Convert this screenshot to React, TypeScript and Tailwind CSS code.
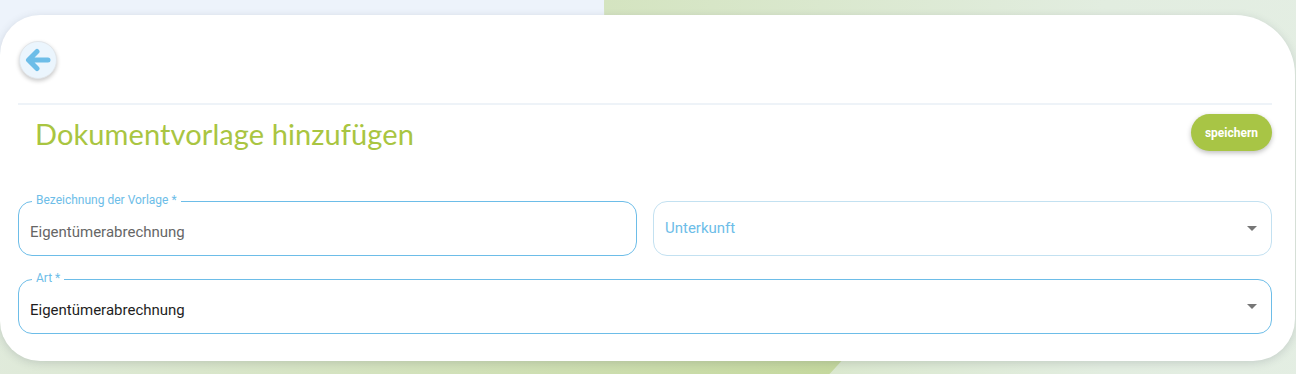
import React from "react"

function BackArrow() {
  return (
    <svg viewBox="0 0 26 24" className="w-[26px] h-[24px]" fill="none" stroke="#6dbde8" strokeWidth="5" strokeLinecap="round" strokeLinejoin="round">
      <path d="M23 12H4M12 3.5L3.5 12L12 20.5" />
    </svg>
  )
}

function Caret() {
  return (
    <svg viewBox="0 0 10 5" className="w-[10px] h-[5px]" fill="#767676">
      <path d="M0 0h10L5 5z" />
    </svg>
  )
}

function Field({
  label,
  value,
  valueClass,
  select,
  className,
}: {
  label?: string
  value: string
  valueClass: string
  select?: boolean
  className?: string
}) {
  return (
    <div
      className={
        "relative h-[55px] rounded-[14px] border flex items-center px-[11px] " +
        (label ? "border-[#6dbde8] " : "border-[#c3e1f1] ") +
        (className ?? "")
      }
    >
      {label && (
        <span className="absolute -top-[9px] left-[13px] bg-white px-[4px] text-[12px] leading-[15px] text-[#6dbde8]">
          {label}
        </span>
      )}
      <span className={"flex-1 text-[15px] " + valueClass + (label ? " pt-[8px]" : "")}>{value}</span>
      {select && (
        <span className="mr-[3px]">
          <Caret />
        </span>
      )}
    </div>
  )
}

export default function App() {
  return (
    <div className="relative w-[1296px] h-[374px] overflow-hidden bg-[#edf3fb] font-['Roboto',sans-serif]">
      {/* background blobs */}
      <div className="absolute left-[604px] top-[-493px] w-[1000px] h-[1000px] rounded-full bg-gradient-to-r from-[#d4e4c0] via-[#e2ede0] to-[#e6efe7]" />
      <div className="absolute left-[-120px] top-[90px] w-[1000px] h-[330px] rounded-full bg-gradient-to-r from-[#e4ede4] via-[#d3e2bd] to-[#c3d79a]" />

      <div className="relative mt-[15px] w-[1295px] h-[346px] bg-white rounded-l-[40px] rounded-tr-[60px] rounded-br-[42px] shadow-[0_2px_8px_rgba(60,70,90,0.18)] pl-[18px] pr-[23px] pt-[26px] flex flex-col">
        <button className="ml-[1px] w-[38px] h-[38px] rounded-full bg-[#ebf5fd] border border-[#e2e6ea] shadow-[0_2px_4px_rgba(0,0,0,0.22)] flex items-center justify-center">
          <BackArrow />
        </button>

        <div className="mt-[24px] h-[2px] bg-[#eef3f8]" />

        <div className="flex items-center justify-between mt-[8px] h-[39px]">
          <h1 className="ml-[17px] mt-[2px] font-['Lato',sans-serif] text-[29px] text-[#a9c541] tracking-[0.1px]">
            Dokumentvorlage hinzufügen
          </h1>
          <button className="w-[81px] h-[37px] rounded-full bg-[#a8c545] text-white text-[12px] font-bold shadow-[0_2px_5px_rgba(0,0,0,0.25)]">
            speichern
          </button>
        </div>

        <div className="grid grid-cols-2 gap-x-[16px] gap-y-[23px] mt-[49px]">
          <Field label="Bezeichnung der Vorlage *" value="Eigentümerabrechnung" valueClass="text-[#666666]" />
          <Field value="Unterkunft" valueClass="text-[#6dbde8]" select />
          <Field label="Art *" value="Eigentümerabrechnung" valueClass="text-[#1e1e1e]" select className="col-span-2" />
        </div>
      </div>
    </div>
  )
}
